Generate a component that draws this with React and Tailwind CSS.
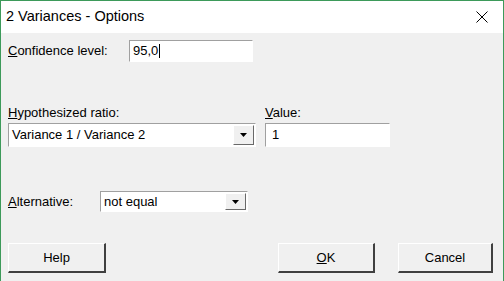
import React from "react";

// sunken 3D text field frame
const fieldCls =
  "bg-white border-t border-l border-t-[#a0a0a0] border-l-[#a0a0a0] border-b border-r border-b-white border-r-white";

function Arrow() {
  return (
    <div className="w-[21px] h-full bg-[#f0f0f0] border-t border-l border-t-white border-l-white border-b border-r border-b-[#696969] border-r-[#696969] flex items-center justify-center">
      <svg width="7" height="4" viewBox="0 0 7 4">
        <path d="M0 0 H7 L3.5 4 Z" fill="#000" />
      </svg>
    </div>
  );
}

function Combo({ value, className }) {
  return (
    <div className={`${fieldCls} flex items-stretch p-px ${className}`}>
      <div className="flex-1 flex items-center pl-[2px] text-[13px] text-black">
        {value}
      </div>
      <Arrow />
    </div>
  );
}

function Button({ children, className }) {
  return (
    <button
      className={`h-[30px] bg-[#f0f0f0] border-t border-l border-t-white border-l-white border-b-2 border-r-2 border-b-[#404040] border-r-[#404040] text-[13px] text-black ${className}`}
    >
      {children}
    </button>
  );
}

export default function App() {
  return (
    <div
      className="w-[504px] h-[281px] flex flex-col border-x border-t border-[#3d9a5a] bg-[#f0f0f0] overflow-hidden"
      style={{ fontFamily: '"Liberation Sans", Arial, sans-serif' }}
    >
      {/* TITLE BAR */}
      <div className="h-[32px] bg-white flex items-center justify-between pl-[5px] pr-[15px]">
        <span className="text-[14.5px] text-black">2 Variances - Options</span>
        <svg width="12" height="12" viewBox="0 0 12 12">
          <path d="M0.5 0.5 L11.5 11.5 M11.5 0.5 L0.5 11.5" stroke="#000" strokeWidth="1" />
        </svg>
      </div>

      {/* BODY */}
      <div className="flex-1 flex flex-col pl-[7px] text-[13px] text-black">
        <div className="flex items-center mt-[7px] h-[22px]">
          <span className="w-[121px]">
            <u>C</u>onfidence level:
          </span>
          <div className={`${fieldCls} w-[124px] h-[22px] flex items-center pl-[3px]`}>
            95,0<span className="w-px h-[14px] bg-black ml-px" />
          </div>
        </div>

        <div className="flex mt-[43px] gap-[9px]">
          <div className="flex flex-col w-[248px]">
            <span className="h-[18px] leading-[16px]">
              <u>H</u>ypothesized ratio:
            </span>
            <Combo value="Variance 1 / Variance 2" className="h-[24px]" />
          </div>
          <div className="flex flex-col w-[125px]">
            <span className="h-[18px] leading-[16px]">
              <u>V</u>alue:
            </span>
            <div className={`${fieldCls} h-[24px] flex items-center pl-[6px]`}>1</div>
          </div>
        </div>

        <div className="flex items-center mt-[44px] h-[21px]">
          <span className="w-[92px]">
            <u>A</u>lternative:
          </span>
          <Combo value="not equal" className="w-[148px] h-[21px]" />
        </div>

        <div className="flex mt-[31px] pr-[10px]">
          <Button className="w-[98px]">Help</Button>
          <div className="flex-1" />
          <Button className="w-[97px]">
            <u>O</u>K
          </Button>
          <Button className="w-[95px] ml-[23px]">Cancel</Button>
        </div>
      </div>
    </div>
  );
}
